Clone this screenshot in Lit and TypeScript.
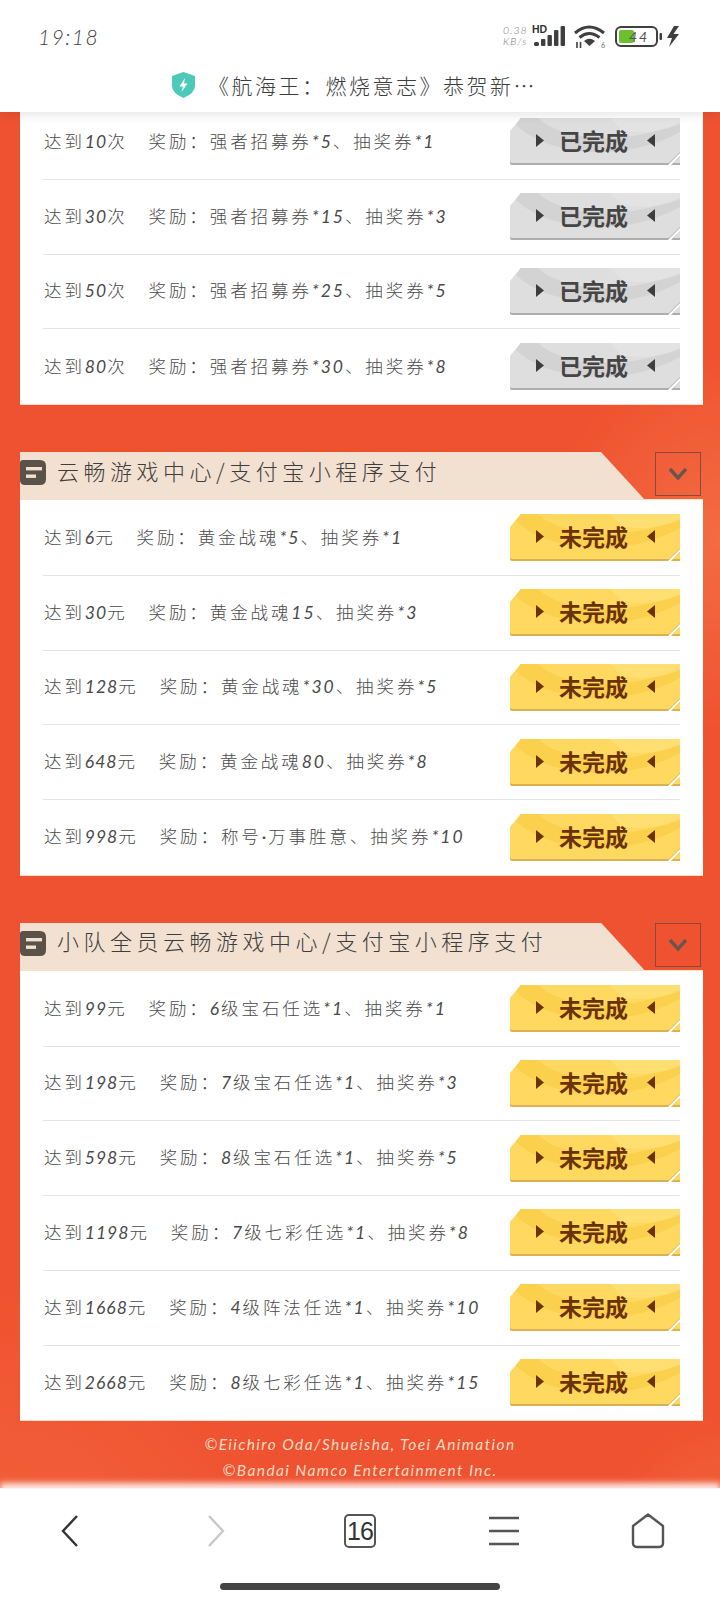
import { LitElement, html, css, svg } from "lit";
import { customElement } from "lit/decorators.js";

type Row = [string, string];
interface Sec { title?: string; done?: boolean; rows: Row[]; }

const SECS: Sec[] = [
  { done: true, rows: [
    ["达到10次", "强者招募券*5、抽奖券*1"],
    ["达到30次", "强者招募券*15、抽奖券*3"],
    ["达到50次", "强者招募券*25、抽奖券*5"],
    ["达到80次", "强者招募券*30、抽奖券*8"],
  ]},
  { title: "云畅游戏中心/支付宝小程序支付", rows: [
    ["达到6元", "黄金战魂*5、抽奖券*1"],
    ["达到30元", "黄金战魂15、抽奖券*3"],
    ["达到128元", "黄金战魂*30、抽奖券*5"],
    ["达到648元", "黄金战魂80、抽奖券*8"],
    ["达到998元", "称号·万事胜意、抽奖券*10"],
  ]},
  { title: "小队全员云畅游戏中心/支付宝小程序支付", rows: [
    ["达到99元", "6级宝石任选*1、抽奖券*1"],
    ["达到198元", "7级宝石任选*1、抽奖券*3"],
    ["达到598元", "8级宝石任选*1、抽奖券*5"],
    ["达到1198元", "7级七彩任选*1、抽奖券*8"],
    ["达到1668元", "4级阵法任选*1、抽奖券*10"],
    ["达到2668元", "8级七彩任选*1、抽奖券*15"],
  ]},
];

/** Digits, asterisks and the middle dot are set in a narrower slanted Latin face, as in the reference. */
const split = (t: string) =>
  t.split(/([0-9*·]+)/).map((p, i) => (i % 2 ? html`<span class="n">${p}</span>` : p));

const btnArt = (done: boolean) => {
  const c = done
    ? { base: "#dedede", band: "#d3d3d3", hi: "#e6e6e6", edge: "#adadad" }
    : { base: "#ffd95f", band: "#fbd04c", hi: "#ffe07a", edge: "#dcb050" };
  return html`<svg class="art" viewBox="0 0 170 47" width="170" height="47" aria-hidden="true">
    ${svg`
    <path d="M0 14 L11 0 H170 V35 L158 47 H2 Q0 47 0 45 Z" fill="${c.edge}"/>
    <path d="M0 13 L11 0 H170 V34 L159 45 H2 Q0 45 0 43 Z" fill="${c.base}"/>
    <path d="M6 7 Q30 30 80 34 Q130 36 170 14 V4 Q120 26 70 18 Q40 12 28 0 H11 Z" fill="${c.band}"/>
    <path d="M100 0 H170 V6 Q140 18 112 12 Z" fill="${c.hi}" opacity=".7"/>
    <path d="M170 38 V47 H161 Z" fill="${c.edge}"/>
    <path d="M170 38 V45 H163 Z" fill="${c.base}"/>`}
  </svg>`;
};

@customElement("app-root")
export class AppRoot extends LitElement {
  static styles = css`
    :host { display: block; width: 720px; height: 1600px; overflow: hidden; font-family: "Noto Sans CJK SC", "Noto Sans", sans-serif; background: #fff; }
    .page { display: flex; flex-direction: column; height: 1600px; }

    .top { position: relative; z-index: 2; height: 112px; flex: none; background: #fff; box-shadow: 0 3px 10px rgba(0,0,0,.1); }
    .status { display: flex; align-items: center; height: 72px; padding: 0 35px 0 38px; }
    .time { font: italic 300 21px/1 Lato, sans-serif; letter-spacing: 1.5px; color: #444; flex: 1; }
    .speed { font: italic 300 10.5px/11px Lato, sans-serif; letter-spacing: 1px; color: #777; width: 29px; text-align: left; }
    .title { display: flex; align-items: center; justify-content: center; gap: 12px; height: 26px; padding-right: 12px; }
    .title span { font-size: 21px; font-weight: 300; letter-spacing: 2.5px; color: #3d3d3d; line-height: 26px; white-space: nowrap; }

    main { flex: 1; min-height: 0; margin-top: -7px; overflow: hidden; padding: 0 17px 0 20px;
      background:
        radial-gradient(170px 190px at 100% 435px, #f36c43 0%, rgba(243,108,67,0) 100%),
        radial-gradient(120px 150px at 100% 1460px, #f26a40 0%, rgba(242,106,64,0) 100%),
        radial-gradient(300px 300px at 0 1480px, #f3633d 0%, rgba(243,99,61,0) 100%),
        #ef5230;
    }
    section + section { margin-top: 48px; }
    .head { display: flex; justify-content: space-between; align-items: flex-start; height: 48px; }
    .ribbon { width: 625px; height: 48px; box-sizing: border-box; background: #f2e1d1; clip-path: polygon(0 0, 581px 0, 100% 100%, 0 100%);
      display: flex; align-items: center; gap: 11px; padding-bottom: 3px; }
    .ribbon .ico { flex: none; margin-top: -4px; }
    .ribbon h2 { margin: -10px 0 0; font-size: 22px; font-weight: 300; letter-spacing: 4.5px; color: #3d3d3d; line-height: 30px; white-space: nowrap; }
    .toggle { box-sizing: border-box; width: 46px; height: 44px; border: 1px solid #8a4b36; margin-right: 2px; display: flex; align-items: center; justify-content: center; }
    .card { background: #fff; padding: 0 23px; border-top: 1px solid #ffe6b8; box-shadow: 0 1px 0 #fbdcc0; margin-top: -1px; }
    .head + .card { padding-top: 1px; }
    .row { height: 74.75px; box-sizing: border-box; display: flex; align-items: center; border-bottom: 1px solid #e3e3e3; font-size: 17.5px; font-weight: 300; letter-spacing: 2.9px; color: #4a4a4a; white-space: nowrap; padding-left: 1px; }
    .row:last-child { border-bottom: 0; }
    .n { font-family: Lato, sans-serif; font-style: italic; font-weight: 400; }
    .label, .reward { padding-bottom: 3px; }
    .label .n { letter-spacing: 1px; }
    .reward { margin-left: 21px; }
    .reward .n { letter-spacing: 2px; }
    .spacer { flex: 1; }
    .btn { position: relative; width: 170px; height: 47px; flex: none; display: flex; align-items: center; justify-content: space-between; box-sizing: border-box; padding: 0 25px 2px 26px; letter-spacing: 0; }
    .art { position: absolute; left: 0; top: 0; }
    .btn b { position: relative; left: -2px; font-size: 23px; font-weight: 700; line-height: 1; color: #6b3208; }
    .btn svg.tri { position: relative; fill: #6b3208; }
    .btn.done b { color: #454545; }
    .btn.done svg.tri { fill: #3d3d3d; }

    footer { margin-left: -3px; padding-top: 11px; text-align: center; font: italic 400 15.5px/26px Lato, sans-serif; letter-spacing: 1.4px; color: #fbdcc4; }

    .nav { position: relative; z-index: 2; flex: none; height: 112px; background: #fff; box-shadow: 0 -5px 6px rgba(255,255,255,.85); border-top: 1px solid #f6f6f6; box-sizing: border-box; display: flex; flex-direction: column; }
    .icons { display: grid; grid-template-columns: repeat(5, 144px); height: 84px; align-items: center; justify-items: center; }
    .tab { box-sizing: border-box; width: 32px; height: 34px; border: 2px solid #555; border-radius: 5px; display: flex; align-items: center; justify-content: center; font: 400 25px/1 "Liberation Sans", sans-serif; letter-spacing: -1px; color: #333; }
    .back { margin-left: -4px; }
    .pill { width: 280px; height: 7px; border-radius: 4px; background: #444; margin: 10px auto 0; }
  `;

  render() {
    return html`<div class="page">
      <div class="top">
        <div class="status">
          <div class="time">19:18</div>
          <div class="speed">0.38<br>KB/s</div>
          <svg width="153" height="24" viewBox="0 0 153 24" aria-hidden="true">
            <text x="0" y="9" font-family="Liberation Sans" font-weight="700" font-size="10.5" fill="#333">HD</text>
            <g fill="#3f3f3f">
              <rect x="2" y="18" width="5" height="4" rx="1.5"/>
              <rect x="9" y="15" width="4.4" height="7" rx="1"/>
              <rect x="15.5" y="11" width="4.4" height="11" rx="1"/>
              <rect x="22" y="6" width="4.4" height="16" rx="1"/>
              <rect x="28.6" y="2" width="4.4" height="20" rx="1"/>
            </g>
            <g fill="none" stroke="#3f3f3f" stroke-width="3">
              <path d="M43 9 Q57 -3 72 9"/>
              <path d="M47.5 13.5 Q57 5.5 67.5 13.5"/>
            </g>
            <path d="M52 17 Q57.5 12.5 63 17 L57.5 22 Z" fill="#3f3f3f"/>
            <path d="M45 18v6M48.5 18v6" stroke="#3f3f3f" stroke-width="1.6"/>
            <text x="69" y="24" font-family="Lato" font-size="7" fill="#666">6</text>
            <rect x="84" y="3" width="41" height="19" rx="5" fill="none" stroke="#3f3f3f" stroke-width="2"/>
            <rect x="87" y="6" width="15" height="13" rx="2" fill="#6cc02c"/>
            <text x="97" y="18" font-family="Lato" font-style="italic" font-size="14" letter-spacing="2" fill="#555">44</text>
            <rect x="127.5" y="9" width="2.5" height="7" rx="1" fill="#3f3f3f"/>
            <path d="M142 2 L135 14 H140 L137 23 L147 10 H141.5 L147 2 Z" fill="#3f3f3f"/>
          </svg>
        </div>
        <div class="title">
          <svg width="25" height="26" viewBox="0 0 25 26" aria-hidden="true">
            <path d="M12.5 0 L24 4 V14 Q24 21 12.5 26 Q1 21 1 14 V4 Z" fill="#4cc9b8"/>
            <path d="M14 6 L8.5 14.5 H12 L10.5 20 L16.5 11.5 H13 Z" fill="#fff"/>
          </svg>
          <span>《航海王：燃烧意志》恭贺新…</span>
        </div>
      </div>

      <main>
        ${SECS.map(s => html`<section>
          ${s.title ? html`<div class="head">
            <div class="ribbon">
              <svg class="ico" width="26" height="25" viewBox="0 0 26 25" aria-hidden="true">
                <path d="M0 3 Q0 0 3 0 H20 Q26 0 26 6 V19 Q26 25 20 25 H5 Q0 25 0 20 Z" fill="#5a5148"/>
                <rect x="6" y="7" width="16" height="3.4" fill="#f2e1d1"/>
                <rect x="6" y="14.5" width="10" height="3.4" fill="#f2e1d1"/>
              </svg>
              <h2>${s.title}</h2>
            </div>
            <div class="toggle">
              <svg width="20" height="14" viewBox="0 0 20 14" aria-hidden="true"><path d="M2 2 L10 11 L18 2" fill="none" stroke="#6a5450" stroke-width="3.4"/></svg>
            </div>
          </div>` : ""}
          <div class="card">
            ${s.rows.map(r => html`<div class="row">
              <span class="label">${split(r[0])}</span>
              <span class="reward">奖励：${split(r[1])}</span>
              <span class="spacer"></span>
              <div class="btn ${s.done ? "done" : ""}">
                ${btnArt(!!s.done)}
                <svg class="tri" width="8" height="13" viewBox="0 0 8 13" aria-hidden="true"><path d="M0 0 L8 6.5 L0 13 Z"/></svg>
                <b>${s.done ? "已完成" : "未完成"}</b>
                <svg class="tri" width="8" height="13" viewBox="0 0 8 13" aria-hidden="true"><path d="M8 0 L0 6.5 L8 13 Z"/></svg>
              </div>
            </div>`)}
          </div>
        </section>`)}
        <footer>©Eiichiro Oda/Shueisha, Toei Animation<br>©Bandai Namco Entertainment Inc.</footer>
      </main>

      <div class="nav">
        <div class="icons">
          <svg class="back" width="20" height="34" viewBox="0 0 20 34" aria-hidden="true"><path d="M17 2 L3 17 L17 32" fill="none" stroke="#333" stroke-width="2.4"/></svg>
          <svg width="20" height="34" viewBox="0 0 20 34" aria-hidden="true"><path d="M3 2 L17 17 L3 32" fill="none" stroke="#c9c9c9" stroke-width="2.4"/></svg>
          <div class="tab">16</div>
          <svg width="32" height="30" viewBox="0 0 32 30" aria-hidden="true"><path d="M1 2H31M1 15H31M1 28H31" stroke="#555" stroke-width="2.4"/></svg>
          <svg width="34" height="36" viewBox="0 0 34 36" aria-hidden="true"><path d="M2 13 L17 1.5 L32 13 V30 Q32 34 28 34 H6 Q2 34 2 30 Z" fill="none" stroke="#555" stroke-width="2.4" stroke-linejoin="round"/></svg>
        </div>
        <div class="pill"></div>
      </div>
    </div>`;
  }
}
